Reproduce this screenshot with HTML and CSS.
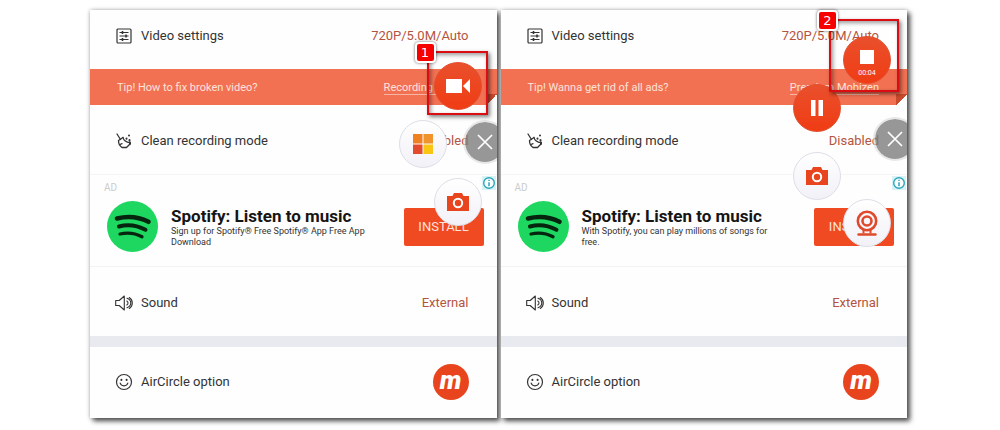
FILE: index.html
```html
<!DOCTYPE html>
<html lang="en">
<head>
  <meta charset="UTF-8">
  <meta name="viewport" content="width=device-width, initial-scale=1.0">
  <title>Mobizen recording steps</title>
  <link rel="stylesheet" href="styles.css">
</head>
<body>

  <!-- Shared icons -->
  <svg class="sprite" aria-hidden="true">
    <symbol id="settings" viewBox="0 0 18 18">
      <g fill="none" stroke="#333" stroke-width="1.2">
        <rect x="2" y="2" width="14" height="14" rx="1"/>
        <path d="M4.5 5.5h9M4.5 9h9M4.5 12.5h9"/>
        <path d="M7.5 4v3M11 7.5v3M7.5 11v3" stroke-width="1.6"/>
      </g>
    </symbol>
    <symbol id="broom" viewBox="0 0 18 18">
      <g fill="none" stroke="#333" stroke-width="1.3" stroke-linecap="round" stroke-linejoin="round">
        <path d="M2 2 5.500 7.500"/>
        <path d="M8 5.500 3.500 8.500c0 3 1.300 5.500 3.500 7h4.500l3-3"/>
        <path d="M8 5.500c.5 2.700 3.500 5 6.500 5.200M5 12.500l2-.8"/>
        <path d="M14.500 8v.5M11.500 6.500v.2M14 3.500v.1M15 10.500v1.500" stroke-width="2"/>
      </g>
    </symbol>
    <symbol id="sound" viewBox="0 0 18 18">
      <g fill="none" stroke="#333" stroke-width="1.1" stroke-linejoin="round" stroke-linecap="round">
        <path d="M.7 6.500h3.500L9.300 2v14l-5.100-4.500H.7z"/>
        <path d="M11.800 7c1.600.8 1.600 3.200 0 4M12 4.300c5 1.700 5 7.700 0 9.400M14.300 3.500c4 2.500 4 8.500 0 11"/>
      </g>
    </symbol>
    <symbol id="smile" viewBox="0 0 18 18">
      <g fill="none" stroke="#333" stroke-width="1.2" stroke-linecap="round">
        <circle cx="9" cy="9" r="7.500"/>
        <path d="M5.200 10.200c1 3.500 6.600 3.500 7.600 0"/>
        <path d="M6.400 6.800v.2M11.600 6.800v.2" stroke-width="2"/>
      </g>
    </symbol>
    <symbol id="spotify" viewBox="0 0 51 51">
      <circle cx="25.500" cy="25.500" r="25.500" fill="#1ed760"/>
      <g fill="none" stroke="#06250f" stroke-linecap="round">
        <path d="M10 17.500c11-2.700 22-1.500 31.500 3.300" stroke-width="4.600"/>
        <path d="M12 25.500c9-2.300 18-1.200 26.500 3.300" stroke-width="4"/>
        <path d="M13 33c8-1.800 15-1 22 2.800" stroke-width="3.300"/>
      </g>
    </symbol>
    <symbol id="info" viewBox="0 0 14 14">
      <circle cx="7" cy="7" r="5.300" fill="#fff" stroke="#2ba5b8" stroke-width="1.400"/>
      <path d="M7 6.200v4M7 3.700v1.300" stroke="#2ba5b8" stroke-width="1.500"/>
    </symbol>
    <symbol id="camera" viewBox="0 0 24 18">
      <path d="M1 3h5.500L8 0h8l1.500 3H23v15H1z" fill="#e8451f"/>
      <circle cx="12" cy="10" r="4.200" fill="none" stroke="#fff" stroke-width="2"/>
    </symbol>
    <symbol id="close" viewBox="0 0 16 16">
      <path d="M1 1l14 14M15 1 1 15" stroke="#fff" stroke-width="1.700"/>
    </symbol>
  </svg>

  <main class="steps">

    <!-- Step 1: start recording -->
    <section class="phone">
      <div class="row row-video">
        <svg class="icon"><use href="#settings"/></svg>
        <span class="label">Video settings</span>
        <span class="value">720P/5.0M/Auto</span>
      </div>
      <div class="tip">
        <span>Tip! How to fix broken video?</span>
        <a href="#">Recording Failure</a>
      </div>
      <div class="row">
        <svg class="icon"><use href="#broom"/></svg>
        <span class="label">Clean recording mode</span>
        <span class="value">Disabled</span>
      </div>
      <div class="ad">
        <span class="ad-label">AD</span>
        <svg class="ad-info"><use href="#info"/></svg>
        <div class="ad-body">
          <svg class="ad-logo"><use href="#spotify"/></svg>
          <div class="ad-copy">
            <h2>Spotify: Listen to music</h2>
            <p>Sign up for Spotify® Free Spotify® App Free App Download</p>
          </div>
          <button class="install">INSTALL</button>
        </div>
      </div>
      <div class="row">
        <svg class="icon"><use href="#sound"/></svg>
        <span class="label">Sound</span>
        <span class="value">External</span>
      </div>
      <div class="row row-air">
        <svg class="icon"><use href="#smile"/></svg>
        <span class="label">AirCircle option</span>
        <span class="air">m</span>
      </div>

      <div class="floating">
        <button class="bubble red one-record" aria-label="Record">
          <svg width="26" height="16" viewBox="0 0 26 16"><path d="M1 1h16v14H1zM18 8l7-7v14z" fill="#fff"/></svg>
        </button>
        <button class="bubble one-apps" aria-label="Apps">
          <svg width="20" height="20" viewBox="0 0 20 20">
            <path d="M0 0h9.500v9.500H0z" fill="#ef8123"/>
            <path d="M10.500 0H20v9.500h-9.500z" fill="#f0932a"/>
            <path d="M0 10.500h9.500V20H0z" fill="#e24b2b"/>
            <path d="M10.500 10.500H20V20h-9.500z" fill="#fac413"/>
          </svg>
        </button>
        <button class="bubble one-camera" aria-label="Screenshot"><svg width="24" height="18"><use href="#camera"/></svg></button>
        <button class="bubble gray one-close" aria-label="Close"><svg width="16" height="16"><use href="#close"/></svg></button>
      </div>
      <div class="mark mark-one"><span class="step">1</span></div>
    </section>

    <!-- Step 2: stop recording -->
    <section class="phone">
      <div class="row row-video">
        <svg class="icon"><use href="#settings"/></svg>
        <span class="label">Video settings</span>
        <span class="value">720P/5.0M/Auto</span>
      </div>
      <div class="tip">
        <span>Tip! Wanna get rid of all ads?</span>
        <a href="#">Premium Mobizen</a>
      </div>
      <div class="row">
        <svg class="icon"><use href="#broom"/></svg>
        <span class="label">Clean recording mode</span>
        <span class="value">Disabled</span>
      </div>
      <div class="ad">
        <span class="ad-label">AD</span>
        <svg class="ad-info"><use href="#info"/></svg>
        <div class="ad-body">
          <svg class="ad-logo"><use href="#spotify"/></svg>
          <div class="ad-copy">
            <h2>Spotify: Listen to music</h2>
            <p>With Spotify, you can play millions of songs for free.</p>
          </div>
          <button class="install">INSTALL</button>
        </div>
      </div>
      <div class="row">
        <svg class="icon"><use href="#sound"/></svg>
        <span class="label">Sound</span>
        <span class="value">External</span>
      </div>
      <div class="row row-air">
        <svg class="icon"><use href="#smile"/></svg>
        <span class="label">AirCircle option</span>
        <span class="air">m</span>
      </div>

      <div class="floating">
        <button class="bubble red two-stop" aria-label="Stop">
          <svg width="14" height="14" viewBox="0 0 14 14"><path d="M0 0h14v14H0z" fill="#fff"/></svg>
          <span class="time">00:04</span>
        </button>
        <button class="bubble red two-pause" aria-label="Pause">
          <svg width="14" height="18" viewBox="0 0 14 18"><path d="M1 1h4.500v16H1zM8.500 1H13v16H8.500z" fill="#fff"/></svg>
        </button>
        <button class="bubble two-camera" aria-label="Screenshot"><svg width="24" height="18"><use href="#camera"/></svg></button>
        <button class="bubble two-webcam" aria-label="Webcam">
          <svg width="22" height="26" viewBox="0 0 22 26">
            <g fill="none" stroke="#e04a2c">
              <circle cx="11" cy="11" r="9.200" stroke-width="2.600"/>
              <circle cx="11" cy="11" r="4.500" stroke-width="2.600"/>
              <path d="M2.500 24.500h17" stroke-width="2.400" stroke-linecap="round"/>
              <path d="M7.500 19.500v4M14.500 19.500v4" stroke-width="2"/>
            </g>
          </svg>
        </button>
        <button class="bubble gray two-close" aria-label="Close"><svg width="16" height="16"><use href="#close"/></svg></button>
      </div>
      <div class="mark mark-two"><span class="step">2</span></div>
    </section>

  </main>

</body>
</html>
```
FILE: styles.css
```css
* {
  box-sizing: border-box;
}
body {
  margin: 0;
  background: #fff;
  font-family: Roboto, "Liberation Sans", sans-serif;
  color: #333;
}
.sprite {
  position: absolute;
  width: 0;
  height: 0;
}
.steps {
  display: grid;
  grid-template-columns: 1fr 1fr;
  gap: 4px;
  padding: 10px 93px 12px 90px;
}
.phone {
  position: relative;
  background: #fefefe;
  box-shadow: 3px 3px 5px #4a4a4a, 0 0 4px #bbb;
}

/* Setting rows */
.row {
  display: flex;
  align-items: center;
  height: 69px;
  padding: 2px 28px 0 25px;
  font-size: 13px;
}
.row-video {
  height: 59px;
  padding-top: 0;
  padding-bottom: 8px;
}
.row-air {
  height: 82px;
  padding-top: 0;
  padding-bottom: 2px;
  border-top: 11px solid #e9e9f0;
}
.icon {
  width: 18px;
  height: 18px;
  margin-right: 8px;
}
.label {
  flex: 1;
}
.value {
  color: #b4543f;
}
.air {
  width: 36px;
  height: 36px;
  border-radius: 50%;
  background: #e8451f;
  color: #fff;
  font-size: 26px;
  font-weight: 900;
  font-style: italic;
  line-height: 33px;
  text-align: center;
}

/* Orange tip bar with a folded corner */
.tip {
  position: relative;
  display: flex;
  justify-content: space-between;
  align-items: center;
  height: 36px;
  padding: 1px 28px 0 27px;
  background: #f27153;
  color: #fde3da;
  font-size: 11px;
}
.tip a {
  color: #fde3da;
  text-decoration: none;
  border-bottom: 1px solid #f9b5a3;
}
.tip::after {
  content: "";
  position: absolute;
  right: 0;
  bottom: 0;
  width: 11px;
  height: 11px;
  background: linear-gradient(135deg, #c94a2c 50%, #fefefe 50%);
}

/* Ad */
.ad {
  position: relative;
  padding: 7px 13px 14px 17px;
  border-top: 1px solid #f5f5f5;
  border-bottom: 1px solid #f3f3f3;
}
.ad-label {
  display: block;
  margin: 0 0 7px -3px;
  color: #ccc;
  font-size: 10px;
  line-height: 12px;
}
.ad-info {
  position: absolute;
  top: 1px;
  right: 1px;
  width: 14px;
  height: 14px;
  background: #d9f2f6;
}
.ad-body {
  display: flex;
  align-items: center;
}
.ad-logo {
  width: 51px;
  height: 51px;
  margin-right: 13px;
}
.ad-copy {
  flex: 1;
}
.ad-copy h2 {
  margin: 0;
  color: #151515;
  font-size: 17px;
  font-weight: 700;
  line-height: 20px;
}
.ad-copy p {
  max-width: 202px;
  margin: 0;
  font-size: 9px;
  line-height: 11px;
}
.install {
  width: 80px;
  height: 38px;
  padding: 0;
  border: none;
  border-radius: 2px;
  background: #f04a22;
  color: #fde3da;
  font-family: inherit;
  font-size: 13px;
}

/* Floating AirCircle buttons */
.floating {
  position: absolute;
  inset: 0;
  overflow: hidden;
}
.bubble {
  position: absolute;
  display: flex;
  flex-direction: column;
  justify-content: center;
  align-items: center;
  width: 48px;
  height: 48px;
  padding: 0;
  border: 1px solid #dedee6;
  border-radius: 50%;
  background: linear-gradient(#fff, #f1f1f8);
  font-family: inherit;
}
.red {
  border-color: #e2502f;
  background: linear-gradient(#e9502c, #f03c14);
}
.gray {
  width: 44px;
  height: 44px;
  border: 2px solid rgba(215, 215, 215, 0.6);
  background: rgba(125, 125, 125, 0.8) padding-box;
}
.time {
  margin-top: 5px;
  color: #fff;
  font-size: 7px;
  line-height: 8px;
}
.one-record { top: 52px; right: 15px; }
.one-apps { top: 110px; right: 50px; }
.one-camera { top: 168px; right: 15px; }
.one-close { top: 110px; right: -10px; }
.two-stop { top: 26px; right: 16px; padding-top: 7px; }
.two-pause { top: 74px; right: 66px; }
.two-camera { top: 142px; right: 66px; }
.two-webcam { top: 189px; right: 16px; }
.two-close { top: 107px; right: -10px; }

/* Numbered highlight boxes */
.mark {
  position: absolute;
  border: 2px solid #dc0d12;
  box-shadow: 2px 2px 4px rgba(0, 0, 0, 0.5), inset 2px 2px 4px rgba(0, 0, 0, 0.4);
  pointer-events: none;
}
.mark-one {
  top: 41px;
  right: 9px;
  width: 61px;
  height: 64px;
}
.mark-two {
  top: 9px;
  right: 8px;
  width: 70px;
  height: 73px;
}
.step {
  position: absolute;
  top: -11px;
  left: -14px;
  width: 21px;
  height: 21px;
  border: 2px solid #fff;
  border-radius: 4px;
  background: #f60000;
  box-shadow: 0 0 3px rgba(0, 0, 0, 0.6);
  color: #fff;
  font-family: "DejaVu Sans", sans-serif;
  font-size: 13px;
  line-height: 17px;
  text-align: center;
}
```
